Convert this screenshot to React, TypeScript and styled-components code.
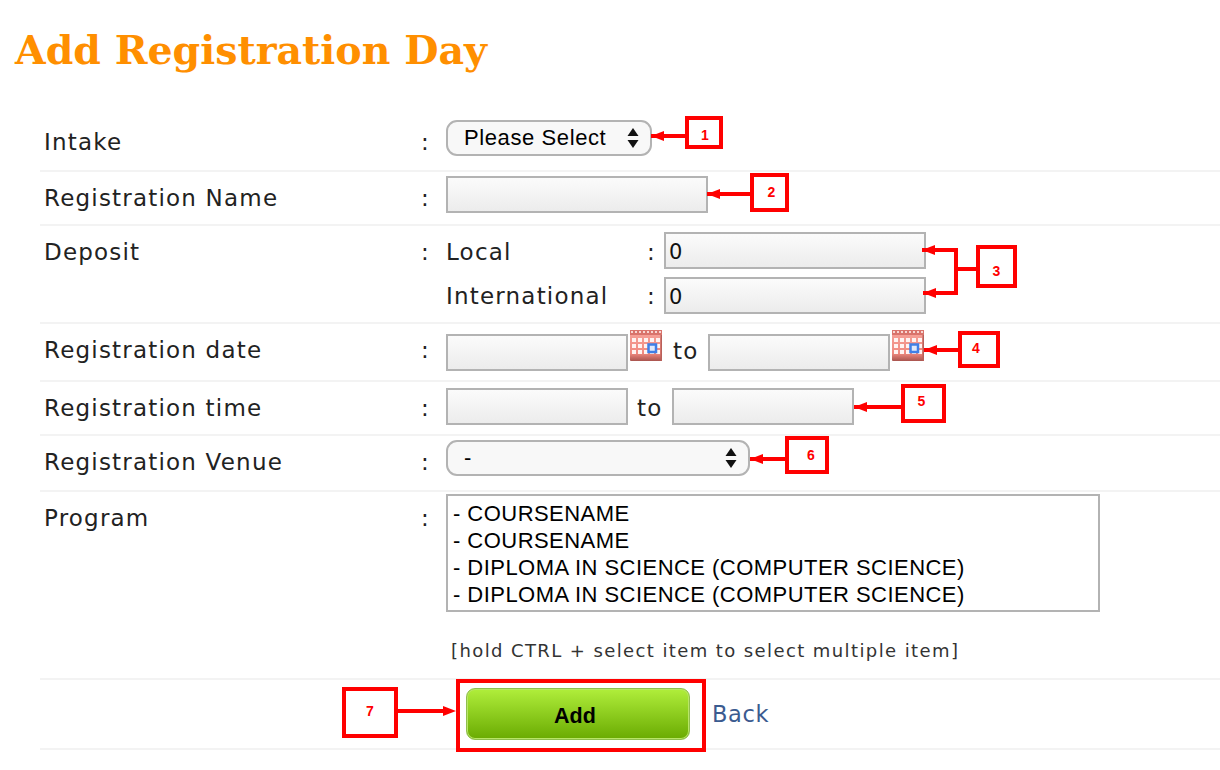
import styled, { createGlobalStyle } from 'styled-components';

const GlobalStyle = createGlobalStyle`
  html, body {
    margin: 0;
    padding: 0;
    background: #fff;
  }
`;

const Page = styled.div`
  position: relative;
  width: 1220px;
  height: 770px;
  overflow: hidden;
  background: #fff;
  font-family: "DejaVu Sans", sans-serif;
  color: #222;
`;

const Title = styled.h1`
  margin: 0;
  padding: 25px 0 0 15px;
  height: 89px;
  box-sizing: border-box;
  font-family: "DejaVu Serif", serif;
  font-size: 39.5px;
  line-height: 50px;
  font-weight: 700;
  color: #ff8f00;
`;

const Form = styled.div`
  margin-left: 40px;
`;

const Row = styled.div<{ $height: number }>`
  display: grid;
  grid-template-columns: 381px 25px 1fr;
  height: ${(p) => p.$height}px;
  box-sizing: border-box;
  border-bottom: 2px solid #f3f3f3;
`;

const Label = styled.div<{ $top?: number }>`
  padding: ${(p) => p.$top ?? 11}px 0 0 4px;
  font-size: 23px;
  line-height: 30px;
  letter-spacing: 1.2px;
`;

const Colon = styled(Label)`
  padding-left: 0;
`;

const Value = styled.div<{ $top: number }>`
  padding-top: ${(p) => p.$top}px;
  display: flex;
  flex-direction: column;
  align-items: flex-start;
`;

const Line = styled.div<{ $gap?: number }>`
  display: flex;
  align-items: flex-start;
  margin-top: ${(p) => p.$gap ?? 0}px;
`;

const Input = styled.input<{ $width: number }>`
  width: ${(p) => p.$width}px;
  height: 37px;
  box-sizing: border-box;
  padding: 3px 3px 0;
  border: 2px solid #b3b3b3;
  border-radius: 0;
  outline: none;
  background: linear-gradient(#fbfbfb, #ececec);
  font-family: "DejaVu Sans", sans-serif;
  font-size: 21px;
  color: #111;
`;

const SelectBox = styled.div<{ $width: number }>`
  position: relative;
  width: ${(p) => p.$width}px;
  height: 36px;
`;

const SelectField = styled.select`
  width: 100%;
  height: 100%;
  box-sizing: border-box;
  padding: 0 0 2px 16px;
  appearance: none;
  border: 2px solid #b3b3b3;
  border-radius: 11px;
  outline: none;
  background: #f8f8f8;
  font-family: "Liberation Sans", sans-serif;
  font-size: 22px;
  letter-spacing: 0.6px;
  color: #000;
`;

const Updown = styled.svg`
  position: absolute;
  top: 8px;
  right: 13px;
`;

const SubLabel = styled.div<{ $width: number; $top: number }>`
  width: ${(p) => p.$width}px;
  padding-top: ${(p) => p.$top}px;
  font-size: 23px;
  line-height: 30px;
  letter-spacing: 1.2px;
`;

const Spacer = styled.div`
  width: 8px;
`;

const To = styled.div<{ $left: number; $width: number; $top: number }>`
  width: ${(p) => p.$width}px;
  margin-top: ${(p) => p.$top}px;
  padding-left: ${(p) => p.$left}px;
  box-sizing: border-box;
  font-size: 23px;
  line-height: 36px;
  letter-spacing: 1.2px;
`;

const Calendar = styled.svg`
  display: block;
  margin: -4px 0 0 2px;
  flex: none;
`;

const ListBox = styled.div`
  width: 654px;
  height: 118px;
  box-sizing: border-box;
  padding: 5px 0 0 5px;
  border: 2px solid #b3b3b3;
  font-family: "Liberation Sans", sans-serif;
  font-size: 22px;
  letter-spacing: 0.46px;
  line-height: 26.9px;
  color: #000;
`;

const Hint = styled.div`
  margin: 27px 0 0 5px;
  font-size: 18px;
  line-height: 24px;
  letter-spacing: 1.4px;
  color: #333;
`;

const Actions = styled.div`
  display: flex;
  align-items: flex-start;
  padding: 8px 0 0 20px;
`;

const AddButton = styled.button`
  width: 224px;
  height: 52px;
  box-sizing: border-box;
  padding: 5px 6px 0 0;
  border: 1px solid #8fbf4e;
  border-radius: 9px;
  box-shadow: inset 0 0 0 1px #b9e567;
  background: linear-gradient(#b0ee3b, #6aab02);
  font-family: "Liberation Sans", sans-serif;
  font-size: 21.5px;
  font-weight: 700;
  color: #000;
`;

const BackLink = styled.a`
  margin: 8px 0 0 22px;
  font-size: 22.5px;
  line-height: 36px;
  letter-spacing: 0.6px;
  color: #3b5b90;
`;

const Overlay = styled.svg`
  position: absolute;
  inset: 0;
  pointer-events: none;
`;

const Marker = styled.div<{ $x: number; $y: number; $w: number; $h: number }>`
  position: absolute;
  left: ${(p) => p.$x}px;
  top: ${(p) => p.$y}px;
  width: ${(p) => p.$w}px;
  height: ${(p) => p.$h}px;
  box-sizing: border-box;
  display: flex;
  align-items: center;
  justify-content: center;
  border: 4px solid #f00;
  font-family: "Liberation Sans", sans-serif;
  font-size: 14px;
  font-weight: 700;
  color: #f00;
`;

const Digit = styled.span<{ $dx: number; $dy: number }>`
  transform: translate(${(p) => p.$dx}px, ${(p) => p.$dy}px);
`;

const BigFrame = styled.div`
  position: absolute;
  left: 456px;
  top: 679px;
  width: 250px;
  height: 73px;
  box-sizing: border-box;
  border: 4px solid #f00;
`;

const markers = [
  { n: '1', x: 685, y: 116, w: 38, h: 33, dx: 1, dy: 2 },
  { n: '2', x: 750, y: 173, w: 39, h: 39, dx: 2, dy: -1 },
  { n: '3', x: 976, y: 245, w: 41, h: 43, dx: 0, dy: 4 },
  { n: '4', x: 958, y: 331, w: 42, h: 37, dx: -3, dy: -2 },
  { n: '5', x: 901, y: 384, w: 45, h: 39, dx: -2, dy: -3 },
  { n: '6', x: 785, y: 436, w: 44, h: 38, dx: 4, dy: 0 },
  { n: '7', x: 342, y: 687, w: 56, h: 51, dx: 0, dy: -2 },
];

// tip x, tail x, y: every arrow here is a straight horizontal run
const arrows = [
  [651, 686, 136],
  [707, 751, 194],
  [922, 956, 250],
  [923, 956, 293],
  [924, 959, 350],
  [854, 902, 407],
  [750, 786, 459],
];

const Arrow = ({ tip, tail, y }: { tip: number; tail: number; y: number }) => {
  const dir = tail > tip ? 1 : -1;
  return (
    <g fill="#f00" stroke="none">
      <rect x={Math.min(tip, tail)} y={y - 2} width={Math.abs(tail - tip)} height={4} />
      <polygon points={`${tip},${y} ${tip + 13 * dir},${y - 5} ${tip + 13 * dir},${y + 5}`} />
    </g>
  );
};

const UpdownIcon = () => (
  <Updown width="12" height="20" viewBox="0 0 12 20">
    <polygon points="6,0 11.5,8 0.5,8" fill="#111" />
    <polygon points="6,20 11.5,12 0.5,12" fill="#111" />
  </Updown>
);

const CalendarIcon = () => {
  const cols = [2, 8, 14, 20, 26];
  const rows = [8, 14, 20];
  const dots = [1, 5, 9, 13, 17, 21, 25, 29];
  return (
    <Calendar width="32" height="31" viewBox="0 0 32 31">
      <defs>
        <linearGradient id="calBody" x1="0" y1="0" x2="0" y2="1">
          <stop offset="0" stopColor="#f6a49b" />
          <stop offset="0.75" stopColor="#f08a80" />
          <stop offset="1" stopColor="#a9544e" />
        </linearGradient>
      </defs>
      <rect x="0" y="0" width="32" height="31" rx="1" fill="url(#calBody)" />
      <rect x="0" y="0" width="32" height="5" fill="#d9736b" />
      <rect x="30.5" y="5" width="1.5" height="26" fill="#b9605a" />
      {dots.map((x) => (
        <rect key={x} x={x} y="1" width="2" height="2" fill="#f7d6d2" />
      ))}
      {rows.map((y) =>
        cols.map((x) => <rect key={`${x}-${y}`} x={x} y={y} width="4" height="4" fill="#fff3f1" />),
      )}
      <rect x="18.5" y="14.5" width="7.5" height="7.5" fill="#dfe9fb" stroke="#3f7fe6" strokeWidth="2.5" />
    </Calendar>
  );
};

export default function App() {
  return (
    <Page>
      <GlobalStyle />
      <Title>Add Registration Day</Title>
      <Form>
        <Row $height={83}>
          <Label $top={38}>Intake</Label>
          <Colon $top={38}>:</Colon>
          <Value $top={31}>
            <SelectBox $width={206}>
              <SelectField defaultValue="select">
                <option value="select">Please Select</option>
              </SelectField>
              <UpdownIcon />
            </SelectBox>
          </Value>
        </Row>
        <Row $height={54}>
          <Label>Registration Name</Label>
          <Colon>:</Colon>
          <Value $top={4}>
            <Input $width={262} />
          </Value>
        </Row>
        <Row $height={98}>
          <Label>Deposit</Label>
          <Colon>:</Colon>
          <Value $top={6}>
            <Line>
              <SubLabel $width={201} $top={5}>Local</SubLabel>
              <Colon $top={5}>:</Colon>
              <Spacer />
              <Input $width={262} defaultValue="0" />
            </Line>
            <Line $gap={8}>
              <SubLabel $width={201} $top={4}>International</SubLabel>
              <Colon $top={4}>:</Colon>
              <Spacer />
              <Input $width={262} defaultValue="0" />
            </Line>
          </Value>
        </Row>
        <Row $height={58}>
          <Label>Registration date</Label>
          <Colon>:</Colon>
          <Value $top={10}>
            <Line>
              <Input $width={182} />
              <CalendarIcon />
              <To $left={11} $width={46} $top={-1}>to</To>
              <Input $width={182} />
              <CalendarIcon />
            </Line>
          </Value>
        </Row>
        <Row $height={54}>
          <Label>Registration time</Label>
          <Colon>:</Colon>
          <Value $top={6}>
            <Line>
              <Input $width={182} />
              <To $left={9} $width={44} $top={2}>to</To>
              <Input $width={182} />
            </Line>
          </Value>
        </Row>
        <Row $height={56}>
          <Label>Registration Venue</Label>
          <Colon>:</Colon>
          <Value $top={4}>
            <SelectBox $width={304}>
              <SelectField defaultValue="none">
                <option value="none">-</option>
              </SelectField>
              <UpdownIcon />
            </SelectBox>
          </Value>
        </Row>
        <Row $height={188}>
          <Label>Program</Label>
          <Colon>:</Colon>
          <Value $top={2}>
            <ListBox>
              <div>- COURSENAME</div>
              <div>- COURSENAME</div>
              <div>- DIPLOMA IN SCIENCE (COMPUTER SCIENCE)</div>
              <div>- DIPLOMA IN SCIENCE (COMPUTER SCIENCE)</div>
            </ListBox>
            <Hint>[hold CTRL + select item to select multiple item]</Hint>
          </Value>
        </Row>
        <Row $height={70}>
          <div />
          <div />
          <Actions>
            <AddButton>Add</AddButton>
            <BackLink>Back</BackLink>
          </Actions>
        </Row>
      </Form>
      <Overlay width="1220" height="770" viewBox="0 0 1220 770">
        {arrows.map(([tip, tail, y]) => (
          <Arrow key={`${tip}-${y}`} tip={tip} tail={tail} y={y} />
        ))}
        <g fill="#f00">
          <rect x="954" y="248" width="4" height="47" />
          <rect x="956" y="267" width="21" height="4" />
          <polygon points="456,711 443,706 443,716" />
          <rect x="398" y="709" width="46" height="4" />
        </g>
      </Overlay>
      {markers.map((m) => (
        <Marker key={m.n} $x={m.x} $y={m.y} $w={m.w} $h={m.h}>
          <Digit $dx={m.dx} $dy={m.dy}>{m.n}</Digit>
        </Marker>
      ))}
      <BigFrame />
    </Page>
  );
}
